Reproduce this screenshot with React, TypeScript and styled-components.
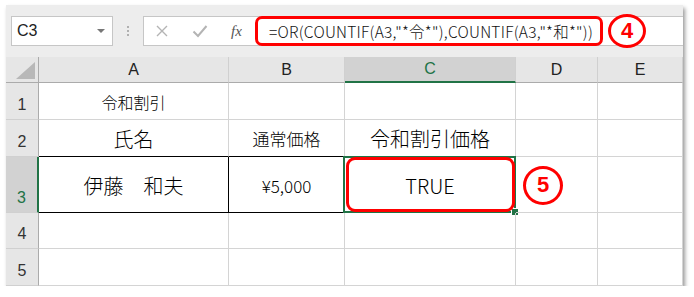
import React from 'react';
import styled, {createGlobalStyle} from 'styled-components';

const GlobalStyle = createGlobalStyle`
    body {
        margin: 0;
        background: #ffffff;
        font-family: "Noto Sans CJK JP", "Liberation Sans", sans-serif;
    }
`;

const COLS = ['A', 'B', 'C', 'D', 'E'];
const SELECTED_COL = 'C';
const SELECTED_ROW = 3;

export default function App() {
    return (
        <>
            <GlobalStyle/>
            <Window>
                <FormulaBar>
                    <NameBox>
                        <NameText>{'C3'}</NameText>
                        <DropArrow/>
                    </NameBox>
                    <Grip>
                        <Dot/>
                        <Dot/>
                        <Dot/>
                    </Grip>
                    <FormulaBox>
                        <Tools>
                            <svg
                                width='14'
                                height='14'
                                viewBox='0 0 14 14'
                            >
                                <path
                                    d='M2 2 L12 12 M12 2 L2 12'
                                    stroke='#b4b4b4'
                                    strokeWidth='1.4'
                                />
                            </svg>
                            <svg
                                width='16'
                                height='14'
                                viewBox='0 0 16 14'
                            >
                                <path
                                    d='M1.5 7.5 L6 12 L14.5 2'
                                    stroke='#b4b4b4'
                                    strokeWidth='2'
                                    fill='none'
                                />
                            </svg>
                            <Fx>{'fx'}</Fx>
                        </Tools>
                        <FormulaText>{'=OR(COUNTIF(A3,"*令*"),COUNTIF(A3,"*和*"))'}</FormulaText>
                        <Badge
                            $w={38}
                            $h={34}
                            $left={5}
                        >
                            {'4'}
                        </Badge>
                    </FormulaBox>
                </FormulaBar>
                <Sheet>
                    <Corner><CornerMark/></Corner>
                    {COLS.map((c) => (
                        <ColHead
                            key={c}
                            $active={c === SELECTED_COL}
                        >
                            {c}
                        </ColHead>
                    ))}

                    <RowHead>{'1'}</RowHead>
                    <Cell $size={16}>{'令和割引'}</Cell>
                    <Cell/>
                    <Cell/>
                    <Cell/>
                    <Cell/>

                    <RowHead>{'2'}</RowHead>
                    <Cell
                        $size={20}
                        $darkBottom={true}
                    >
                        {'氏名'}
                    </Cell>
                    <Cell
                        $size={17}
                        $darkBottom={true}
                    >
                        {'通常価格'}
                    </Cell>
                    <Cell $size={20}>{'令和割引価格'}</Cell>
                    <Cell/>
                    <Cell/>

                    <RowHead $active={SELECTED_ROW === 3}>{'3'}</RowHead>
                    <Cell
                        $size={20}
                        $darkBottom={true}
                        $darkRight={true}
                    >
                        {'伊藤　和夫'}
                    </Cell>
                    <Cell
                        $size={17}
                        $darkBottom={true}
                    >
                        {'¥5,000'}
                    </Cell>
                    <Cell $size={20}>
                        {'TRUE'}
                        <Selection/>
                        <FillHandle/>
                        <Highlight/>
                    </Cell>
                    <Cell $start={true}>
                        <Badge
                            $w={40}
                            $h={39}
                            $left={7}
                        >
                            {'5'}
                        </Badge>
                    </Cell>
                    <Cell/>

                    <RowHead>{'4'}</RowHead>
                    <Cell/>
                    <Cell/>
                    <Cell/>
                    <Cell/>
                    <Cell/>

                    <RowHead>{'5'}</RowHead>
                    <Cell/>
                    <Cell/>
                    <Cell/>
                    <Cell/>
                    <Cell/>
                </Sheet>
            </Window>
        </>
    );
}

const Window = styled.div`
    margin: 5px 0 0 6px;
    width: 677px;
    background: #ffffff;
    box-shadow: 2px 3px 4px rgba(0, 0, 0, 0.4);
`;

const FormulaBar = styled.div`
    height: 52px;
    box-sizing: border-box;
    padding: 11px 0 0 5px;
    background: #ededed;
    display: flex;
    align-items: flex-start;
`;

const NameBox = styled.div`
    width: 102px;
    height: 30px;
    box-sizing: border-box;
    background: #ffffff;
    border: 1px solid #c6c6c6;
    display: flex;
    align-items: center;
    justify-content: space-between;
    padding: 0 7px 0 5px;
`;

const NameText = styled.span`
    font-family: "Liberation Sans", sans-serif;
    font-size: 16px;
    color: #222222;
`;

const DropArrow = styled.span`
    width: 0;
    height: 0;
    border-left: 4px solid transparent;
    border-right: 4px solid transparent;
    border-top: 4px solid #777777;
`;

const Grip = styled.div`
    width: 30px;
    height: 30px;
    display: flex;
    flex-direction: column;
    align-items: center;
    justify-content: center;
    gap: 2px;
`;

const Dot = styled.span`
    width: 2px;
    height: 2px;
    background: #b0b0b0;
`;

const FormulaBox = styled.div`
    flex: 1;
    height: 30px;
    box-sizing: border-box;
    background: #ffffff;
    border: 1px solid #c6c6c6;
    border-right: none;
    display: flex;
    align-items: center;
`;

const Tools = styled.div`
    width: 111px;
    display: flex;
    align-items: center;
    gap: 23px;
    padding-left: 11px;
    box-sizing: border-box;
`;

const Fx = styled.span`
    font-family: "Liberation Serif", serif;
    font-style: italic;
    font-size: 15px;
    color: #555555;
`;

const FormulaText = styled.div`
    width: 348px;
    height: 30px;
    box-sizing: border-box;
    margin-top: -1px;
    margin-bottom: -1px;
    border: 3px solid #ff0000;
    border-radius: 7px;
    padding-left: 11px;
    font-size: 15.5px;
    font-weight: 300;
    color: #111111;
    display: flex;
    align-items: center;
    white-space: nowrap;
    letter-spacing: 0.25px;
`;

const Badge = styled.div<{$w: number, $h: number, $left: number}>`
    width: ${({$w}) => $w}px;
    height: ${({$h}) => $h}px;
    box-sizing: border-box;
    margin-left: ${({$left}) => $left}px;
    border: 3px solid #ff0000;
    border-radius: 50%;
    display: flex;
    align-items: center;
    justify-content: center;
    font-family: "Liberation Sans", sans-serif;
    font-weight: 700;
    font-size: 22px;
    color: #ff0000;
`;

const Sheet = styled.div`
    display: grid;
    grid-template-columns: 33px 190px 116px 171px 82px 85px;
    grid-template-rows: 26px 37px 37px 56px 36px 37px;
`;

const Corner = styled.div`
    background: #e6e6e6;
    border-right: 1px solid #ababab;
    border-bottom: 1px solid #ababab;
    position: relative;
`;

const CornerMark = styled.div`
    position: absolute;
    right: 3px;
    bottom: 3px;
    width: 0;
    height: 0;
    border-left: 19px solid transparent;
    border-bottom: 17px solid #b8b8b8;
`;

const ColHead = styled.div<{$active?: boolean}>`
    background: ${({$active}) => ($active ? '#d2d2d2' : '#e6e6e6')};
    color: ${({$active}) => ($active ? '#217346' : '#222222')};
    border-right: 1px solid #d0d0d0;
    border-bottom: ${({$active}) => ($active ? '2px solid #217346' : '1px solid #ababab')};
    box-sizing: border-box;
    font-family: "Liberation Sans", sans-serif;
    font-size: 16px;
    display: flex;
    align-items: center;
    justify-content: center;
`;

const RowHead = styled.div<{$active?: boolean}>`
    background: ${({$active}) => ($active ? '#d2d2d2' : '#e6e6e6')};
    color: ${({$active}) => ($active ? '#217346' : '#333333')};
    border-right: ${({$active}) => ($active ? '2px solid #217346' : '1px solid #ababab')};
    border-bottom: 1px solid #d0d0d0;
    box-sizing: border-box;
    font-family: "Liberation Sans", sans-serif;
    font-size: 16px;
    display: flex;
    align-items: flex-end;
    justify-content: center;
    padding-bottom: 5px;
`;

const Cell = styled.div<{$size?: number, $darkBottom?: boolean, $darkRight?: boolean, $start?: boolean}>`
    position: relative;
    box-sizing: border-box;
    border-right: 1px solid ${({$darkRight}) => ($darkRight ? '#000000' : '#d4d4d4')};
    border-bottom: 1px solid ${({$darkBottom}) => ($darkBottom ? '#000000' : '#d4d4d4')};
    font-size: ${({$size}) => $size ?? 16}px;
    font-weight: 300;
    color: #000000;
    display: flex;
    align-items: center;
    justify-content: ${({$start}) => ($start ? 'flex-start' : 'center')};
    padding-top: 1px;
`;

const Selection = styled.div`
    position: absolute;
    top: -1px;
    left: -2px;
    right: -1px;
    bottom: -1px;
    border: 2px solid #217346;
    pointer-events: none;
`;

const FillHandle = styled.div`
    position: absolute;
    right: -4px;
    bottom: -4px;
    width: 6px;
    height: 6px;
    background: #217346;
    border: 1px solid #ffffff;
`;

const Highlight = styled.div`
    position: absolute;
    top: 0;
    left: 1px;
    right: 0;
    bottom: 0;
    border: 3px solid #ff0000;
    border-radius: 9px;
`;
